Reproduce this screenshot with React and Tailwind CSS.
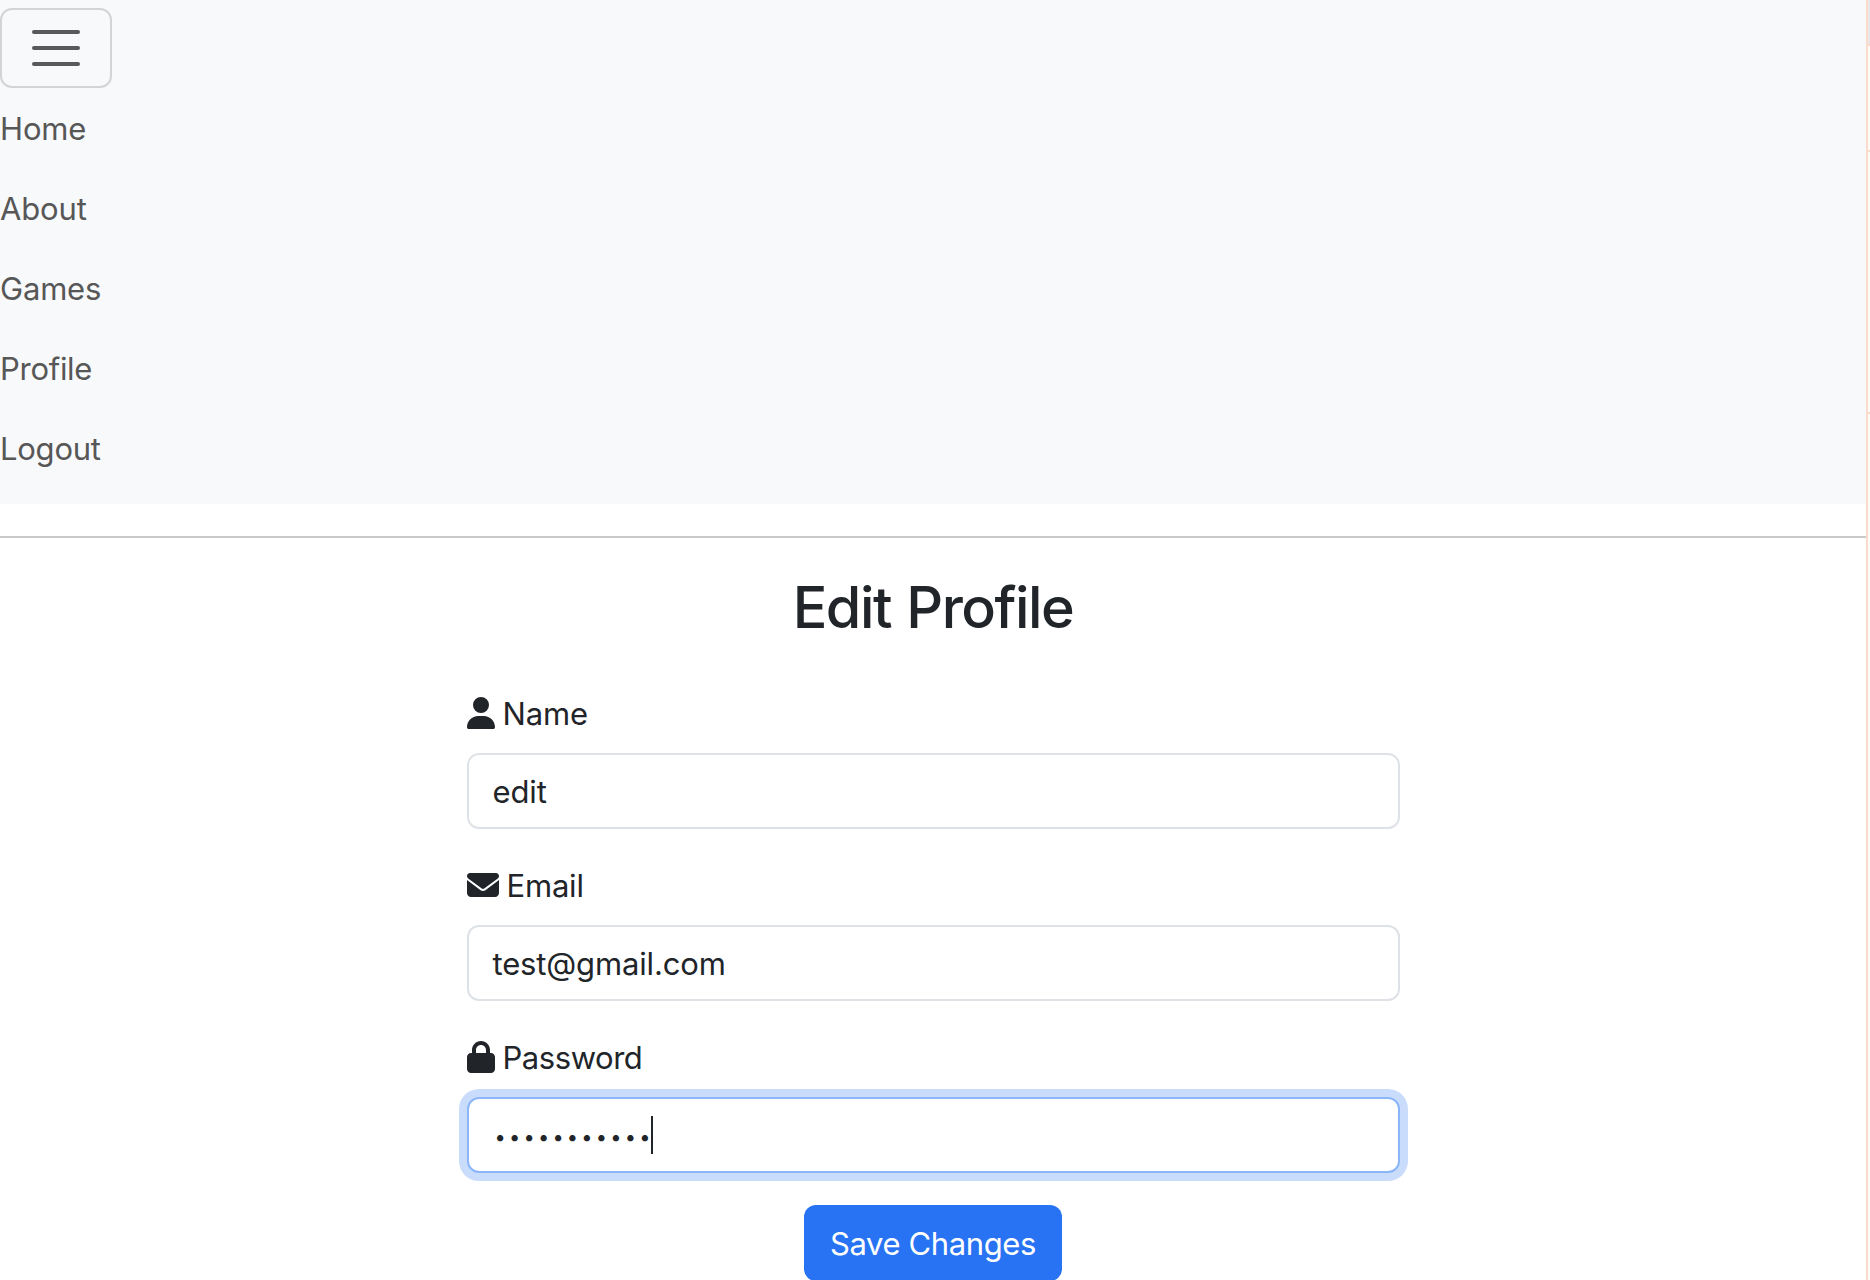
import { FaUser, FaEnvelope, FaLock } from 'react-icons/fa6';

const links = [
  { label: 'Home', tracking: 'tracking-[-0.15px]' },
  { label: 'About', tracking: 'tracking-[-0.15px]' },
  { label: 'Games', tracking: 'tracking-[-0.2px]' },
  { label: 'Profile', tracking: 'tracking-[-0.28px]' },
  { label: 'Logout', tracking: 'tracking-[-0.25px]' },
];

function Navbar() {
  return (
    <nav className="h-[504px] bg-[#f8f9fb] pt-2">
      <button className="flex h-20 w-28 items-center justify-center rounded-xl border-2 border-[#d3d4d6]" aria-label="Toggle navigation">
        <span className="flex w-12 flex-col gap-3">
          <span className="h-1 rounded-full bg-[#58595a]" />
          <span className="h-1 rounded-full bg-[#58595a]" />
          <span className="h-1 rounded-full bg-[#58595a]" />
        </span>
      </button>
      <ul className="text-[#575757]">
        {links.map((link) => (
          <li key={link.label} className="h-20 pt-4">
            <a href="#" className={`block leading-[49px] ${link.tracking}`}>{link.label}</a>
          </li>
        ))}
      </ul>
    </nav>
  );
}

function Field({ icon, label, tracking, focused, children }) {
  return (
    <div className="mb-8">
      <label className="mb-4 flex h-12 items-center">
        {icon}
        <span className={`ml-2 h-12 leading-[49px] ${tracking}`}>{label}</span>
      </label>
      <div
        className={`flex h-[76px] items-center rounded-xl border-2 bg-white pl-6 ${
          focused ? 'border-[#8cb6fa] ring-8 ring-[#c9dcfc]' : 'border-[#dee2e6]'
        }`}
      >
        {children}
      </div>
    </div>
  );
}

function SidePanel() {
  return (
    <aside className="flex h-[1280px] w-1 flex-col border-l-2 border-[#fbdbcb] bg-[#fffbf9]">
      <div className="h-[46px] border-b-2 border-[#fbdbcb] bg-[#ece6ea]" />
      <div className="h-[106px] border-b-2 border-[#fbdbcb]" />
      <div className="h-[262px] border-b-2 border-[#fbdbcb]" />
    </aside>
  );
}

export default function App() {
  return (
    <div className="flex h-[1280px] w-[1870px] overflow-hidden bg-white font-['Inter',sans-serif] text-[31px] text-[#212529]">
      <main className="h-[1280px] w-[1866px] overflow-hidden">
        <Navbar />
        <hr className="mt-8 border-t-2 border-[#c8c9ca]" />
        <h1 className="mt-[34px] text-center text-[57.5px] leading-[70px] font-medium tracking-[-1.5px] [word-spacing:1.5px]">Edit Profile</h1>
        <form className="mx-auto mt-[47px] w-[933px]">
          <Field icon={<FaUser className="h-8 w-7" />} label="Name" tracking="tracking-[-0.15px]">
            <span className="h-12 leading-[49px] tracking-[-0.1px]">edit</span>
          </Field>
          <Field icon={<FaEnvelope className="h-8 w-8" />} label="Email" tracking="tracking-[-0.2px]">
            <span className="h-12 leading-[49px] tracking-[-0.15px]">test@gmail.com</span>
          </Field>
          <Field icon={<FaLock className="h-8 w-7" />} label="Password" tracking="tracking-[-0.45px]" focused>
            <span className="ml-0.5 h-12 pt-0.5 text-[20px] leading-[48px] tracking-[3.22px]">•••••••••••</span>
            <span className="-ml-[2.5px] h-[38px] w-0.5 bg-[#212529]" />
          </Field>
          <button
            type="button"
            className="mx-auto block h-[76px] w-[258px] rounded-xl bg-[#2773f4] text-center leading-[77px] tracking-[-0.38px] text-white"
          >
            Save Changes
          </button>
        </form>
      </main>
      <SidePanel />
    </div>
  );
}
